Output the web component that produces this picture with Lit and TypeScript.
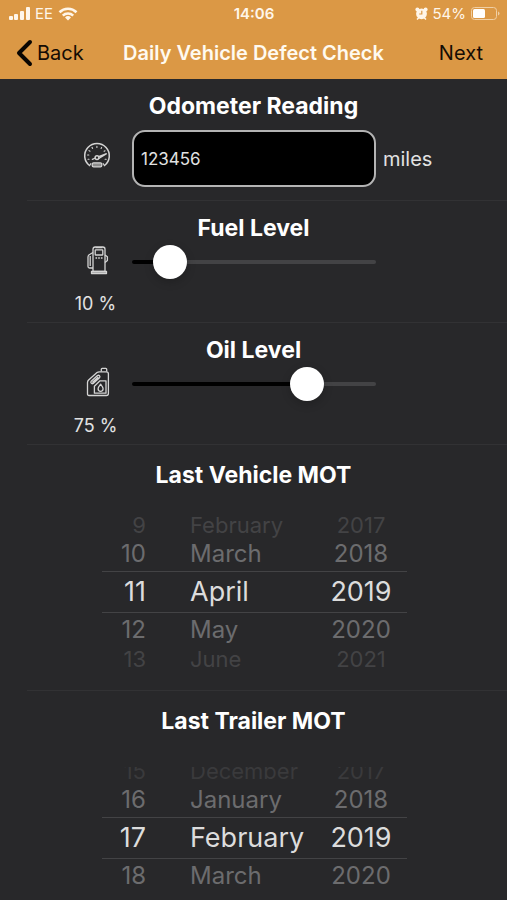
import { LitElement, html, css } from "lit";
import { customElement, property, state } from "lit/decorators.js";
import { classMap } from "lit/directives/class-map.js";
import { styleMap } from "lit/directives/style-map.js";

const MONTHS = [
  "January", "February", "March", "April", "May", "June",
  "July", "August", "September", "October", "November", "December",
];

const gaugeIcon = html`<svg width="28" height="28" viewBox="0 0 28 28" fill="none" stroke="#d4d4d4" stroke-linecap="round" aria-hidden="true">
  <path d="M6.5 24.5A12.3 12.3 0 1 1 21.5 24.5" stroke-width="1.5" />
  <path d="M6.5 24.5l1.4-1.8M21.5 24.5l-1.4-1.8" stroke-width="1.2" />
  <path d="M5 18.2h1M4.6 14h1.2M6 9.6l1 .6M9 6.4l.6 1M13.9 5.2v1.2M18.6 6.4l-.5 1M22 9.8l-.9.5M23.2 18.2h-1.1" stroke-width="1.1" />
  <path d="M9.4 18.4l3-1.400M15.6 15.6l8-3-7.4 4.600" stroke-width="1.3" />
  <circle cx="14" cy="16.6" r="1.9" stroke-width="1.4" />
  <rect x="9.2" y="21.8" width="9.600" height="4" rx="1.4" fill="#8a8a8a" stroke-width="1.2" />
</svg>`;

const pumpIcon = html`<svg width="28" height="30" viewBox="0 0 28 30" fill="none" stroke="#d4d4d4" stroke-width="1.3" stroke-linejoin="round" aria-hidden="true">
  <path d="M9 26.5V4.2Q9 2 11.2 2h7.6Q21 2 21 4.2v22.3z" />
  <rect x="11.2" y="4.8" width="7.6" height="5.2" rx=".6" />
  <path d="M11.5 13h1.6M14.2 13h1.6M16.9 13h1.6M11.5 2.6h7" />
  <path d="M7.5 26.5h15v2h-15z" fill="#8a8a8a" />
  <path d="M9 7.5L5.2 9.8Q4 10.6 4 12v9.5q0 1.5 1.5 1.5H9M6.2 11v10M21 10l2.4 1.8v3.6L21 17.4" />
</svg>`;

const oilIcon = html`<svg width="28" height="30" viewBox="0 0 28 30" fill="none" stroke="#d4d4d4" stroke-width="1.3" stroke-linejoin="round" aria-hidden="true">
  <path d="M5 28.5Q3.5 28.5 3.5 27V15.5Q3.5 14 4.6 13L13 5.6Q14 4.8 15.4 4.8h7q2 0 2 2V26.5q0 2-2 2z" />
  <path d="M17.3 4.6V2.2q0-.9.9-.9h3.6q.9 0 .9.9v2.4" />
  <path d="M7.2 14.2l6.3-5.6q1.1-.8 2 .2t0 2l-6.3 5.6q-1.2.8-2-.2t0-2zM8.3 15.4l6-5.4" />
  <path d="M10.4 26.2v-7l5.6-5.4h6v12.4z" />
  <path d="M16.6 17.2q-2.5 3.2-2.5 4.6a2.5 2.5 0 0 0 5 0q0-1.4-2.5-4.6z" />
</svg>`;

@customElement("status-bar")
class StatusBar extends LitElement {
  static styles = css`
    :host {
      display: grid;
      grid-template-columns: 1fr auto 1fr;
      align-items: center;
      height: 27px;
      padding: 0 7px 0 8px;
      color: #fff6ea;
      font-size: 15px;
    }
    svg { display: block; }
    .side { display: flex; align-items: center; gap: 5px; }
    .end { justify-content: flex-end; gap: 4px; }
    .time { font-weight: 600; }
  `;
  render() {
    return html`
      <div class="side">
        <svg width="22" height="14" viewBox="0 0 22 14" fill="currentColor" aria-label="Signal">
          <rect x="1" y="9" width="4" height="4" rx="1" /><rect x="6" y="7" width="4" height="6" rx="1" />
          <rect x="12" y="4" width="4" height="9" rx="1" /><rect x="18" y="0" width="4" height="13" rx="1" />
        </svg>
        <span>EE</span>
        <svg width="20" height="14" viewBox="0 0 20 14" fill="none" stroke="currentColor" stroke-width="2.6" aria-label="Wi-Fi">
          <path d="M1.5 5.2a12.2 12.2 0 0 1 17 0M4.8 8.6a7.5 7.5 0 0 1 10.4 0" />
          <path d="M10 13.6l-3-3.1a4.3 4.3 0 0 1 6 0z" fill="currentColor" stroke="none" />
        </svg>
      </div>
      <span class="time">14:06</span>
      <div class="side end">
        <svg width="13" height="13" viewBox="0 0 13 13" fill="currentColor" aria-label="Alarm">
          <circle cx="6.5" cy="6.8" r="5.4" /><circle cx="2.4" cy="2.5" r="2" /><circle cx="10.6" cy="2.5" r="2" />
          <path d="M2 12.5l2-2M11 12.5l-2-2" stroke="currentColor" stroke-width="1.5" />
          <path d="M6.800 3.800v3.200H4.200" fill="none" stroke="#db9845" stroke-width="1.2" />
        </svg>
        <span>54%</span>
        <svg width="30" height="15" viewBox="0 0 30 15" aria-label="Battery">
          <rect x="1.5" y="1.5" width="25" height="12" rx="3" fill="none" stroke="#f0cfa4" />
          <rect x="3" y="3" width="12" height="9" rx="1.5" fill="#fff" />
          <path d="M28 5.500q1.5.5 1.5 2t-1.5 2z" fill="#f0cfa4" />
        </svg>
      </div>
    `;
  }
}

@customElement("level-slider")
class LevelSlider extends LitElement {
  @property() label = "";
  @property() icon = "";
  @property({ type: Number }) value = 0;

  static styles = css`
    :host {
      display: grid;
      grid-template-columns: 132px 1fr 131px;
      row-gap: 13px;
      align-items: center;
    }
    .icon { display: flex; justify-content: center; padding-left: 64px; height: 34px; }
    .percent {
      padding-left: 59px;
      text-align: center;
      font-size: 18px;
      line-height: 24px;
      white-space: nowrap;
      color: #e2e2e2;
    }
    input {
      appearance: none;
      width: 100%;
      height: 34px;
      margin: 0;
      background: transparent;
    }
    input::-webkit-slider-runnable-track {
      height: 4px;
      border-radius: 2px;
      background: linear-gradient(to right, #000 var(--fill), #434345 var(--fill));
    }
    input::-webkit-slider-thumb {
      appearance: none;
      width: 34px;
      height: 34px;
      margin-top: -15px;
      border-radius: 50%;
      background: #fff;
      box-shadow: 0 3px 10px rgba(0, 0, 0, 0.2);
    }
  `;
  render() {
    return html`
      <span class="icon">${this.icon === "pump" ? pumpIcon : oilIcon}</span>
      <input type="range" min="0" max="100" aria-label=${this.label} .value=${String(this.value)}
        style=${styleMap({ "--fill": `${this.value}%` })}
        @input=${(e: Event) => { this.value = Number((e.target as HTMLInputElement).value); }} />
      <span></span>
      <output class="percent">${this.value} %</output>
    `;
  }
}

@customElement("date-wheel")
class DateWheel extends LitElement {
  @property({ type: Number }) day = 1;
  @property({ type: Number }) month = 0;
  @property({ type: Number }) year = 2019;
  /** The wheel is still turning: its top row is half out of view and the next one has not come up. */
  @property({ type: Boolean, reflect: true }) rolling = false;

  static styles = css`
    :host {
      display: grid;
      grid-template-columns: 44px 1fr 92px;
      grid-template-rows: 24px 34px 42px 34px 24px;
      margin: 0 100px 0 102px;
    }
    .band {
      grid-area: 3 / 1 / 4 / 4;
      border: solid #434345;
      border-width: 1px 0;
    }
    button {
      border: 0;
      padding: 0;
      background: none;
      font-family: inherit;
      white-space: nowrap;
      text-align: left;
    }
    .day { grid-column: 1; text-align: right; }
    .month { grid-column: 2; padding-left: 44px; }
    .year { grid-column: 3; text-align: center; }
    .far { font-size: 22px; line-height: 24px; color: #434345; }
    .near { font-size: 24px; line-height: 34px; color: #6c6c6e; }
    .chosen { font-size: 27px; line-height: 42px; color: #dcdcdc; }
    :host([rolling]) .first { clip-path: inset(8px 0 0 0); color: #3a3a3c; }
    .r0 { grid-row: 1; }
    .r1 { grid-row: 2; }
    .r2 { grid-row: 3; }
    .r3 { grid-row: 4; }
    .r4 { grid-row: 5; }
  `;

  private cell(kind: string, offset: number, text: string | number, pick: () => void) {
    const distance = Math.abs(offset);
    const classes = {
      [kind]: true,
      [`r${offset + 2}`]: true,
      chosen: distance === 0,
      near: distance === 1,
      far: distance === 2,
      first: offset === -2,
    };
    return html`<button class=${classMap(classes)} aria-pressed=${distance === 0 ? "true" : "false"} @click=${pick}>${text}</button>`;
  }

  render() {
    const offsets = this.rolling ? [-2, -1, 0, 1] : [-2, -1, 0, 1, 2];
    return html`
      <span class="band"></span>
      ${offsets.map((o) => {
        const day = ((this.day - 1 + o + 31) % 31) + 1;
        const month = (this.month + o + 12) % 12;
        const year = this.year + o;
        return html`
          ${this.cell("day", o, day, () => { this.day = day; })}
          ${this.cell("month", o, MONTHS[month], () => { this.month = month; })}
          ${this.cell("year", o, year, () => { this.year = year; })}
        `;
      })}
    `;
  }
}

@customElement("app-root")
class AppRoot extends LitElement {
  @state() private odometer = "123456";

  static styles = css`
    :host {
      display: flex;
      flex-direction: column;
      height: 100vh;
      background: #28282a;
      color: #fff;
      font-family: Inter, "Liberation Sans", sans-serif;
    }
    header { flex: none; background: #db9845; }
    nav {
      display: grid;
      grid-template-columns: 1fr auto 1fr;
      align-items: center;
      height: 52px;
      padding: 0 16px;
    }
    nav button {
      display: flex;
      align-items: center;
      gap: 4px;
      border: 0;
      padding: 0;
      background: none;
      color: #140c04;
      font-family: inherit;
      font-size: 20px;
    }
    .next { justify-self: end; padding-right: 8px; }
    h1 { margin: 0; font-size: 20px; font-weight: 600; white-space: nowrap; color: #fffaf0; }
    main { flex: 1; overflow-y: auto; scrollbar-width: none; }
    section {
      box-sizing: border-box;
      min-height: 122px;
      padding-top: 12px;
      background: linear-gradient(#323234, #323234) 27px 100% / 100% 1px no-repeat;
    }
    .dates { min-height: 246px; padding-top: 15px; }
    h2 {
      margin: 0;
      font-size: 23px;
      line-height: 30px;
      font-weight: 700;
      text-align: center;
    }
    level-slider { margin-top: 2px; }
    date-wheel { margin-top: 23px; }
    .reading {
      display: grid;
      grid-template-columns: 132px 1fr 131px;
      align-items: center;
      margin-top: 9px;
    }
    .icon { display: flex; justify-content: center; padding: 0 0 8px 62px; }
    input {
      box-sizing: border-box;
      width: 100%;
      height: 57px;
      padding: 0 7px;
      border: 2px solid #b4b4b4;
      border-radius: 13px;
      background: #000;
      color: #e2e2e2;
      font-family: inherit;
      font-size: 17px;
    }
    .unit { padding-left: 7px; font-size: 20px; color: #e2e2e2; }
  `;

  render() {
    return html`
      <header>
        <status-bar></status-bar>
        <nav>
          <button>
            <svg width="17" height="28" viewBox="0 0 17 28" fill="none" stroke="#0a0602" stroke-width="4" stroke-linecap="round" stroke-linejoin="round" aria-hidden="true">
              <path d="M14 3L3 14l11 11" />
            </svg>
            Back
          </button>
          <h1>Daily Vehicle Defect Check</h1>
          <button class="next">Next</button>
        </nav>
      </header>
      <main>
        <section>
          <h2><label for="odometer">Odometer Reading</label></h2>
          <div class="reading">
            <span class="icon">${gaugeIcon}</span>
            <input id="odometer" type="text" inputmode="numeric" .value=${this.odometer}
              @input=${(e: Event) => { this.odometer = (e.target as HTMLInputElement).value; }} />
            <span class="unit">miles</span>
          </div>
        </section>
        <section>
          <h2>Fuel Level</h2>
          <level-slider label="Fuel Level" icon="pump" value="10"></level-slider>
        </section>
        <section>
          <h2>Oil Level</h2>
          <level-slider label="Oil Level" icon="oil" value="75"></level-slider>
        </section>
        <section class="dates">
          <h2>Last Vehicle MOT</h2>
          <date-wheel day="11" month="3" year="2019"></date-wheel>
        </section>
        <section class="dates">
          <h2>Last Trailer MOT</h2>
          <date-wheel day="17" month="1" year="2019" rolling></date-wheel>
        </section>
      </main>
    `;
  }
}
